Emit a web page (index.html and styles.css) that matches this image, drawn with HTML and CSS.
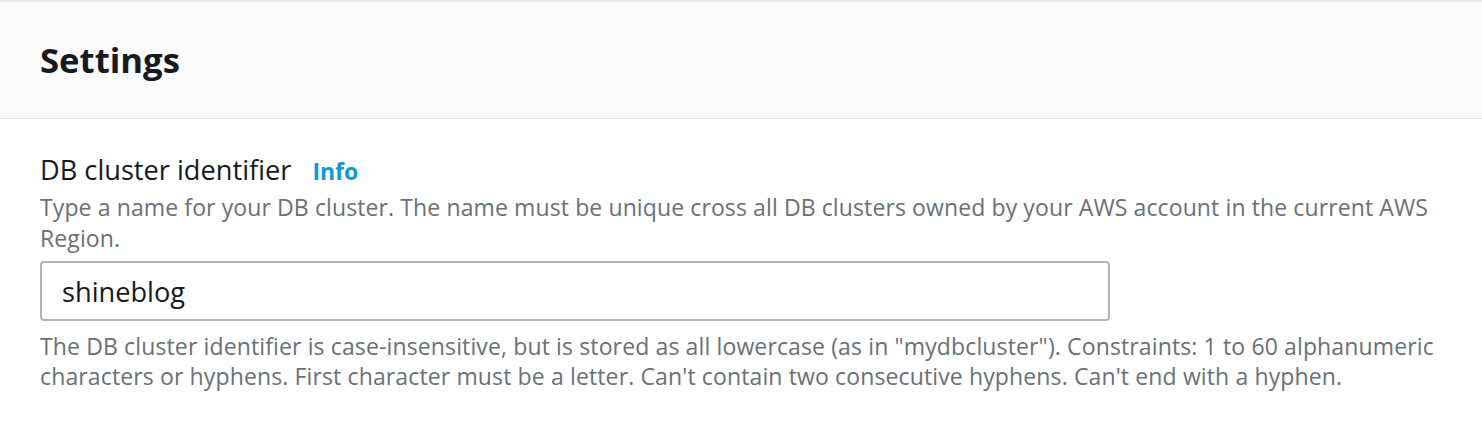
FILE: index.html
```html
<!DOCTYPE html>
<html lang="en">
<head>
<meta charset="utf-8">
<title>Settings</title>
<link rel="stylesheet" href="styles.css">
</head>
<body>
<section class="panel">
  <header class="panel-header">
    <h2 class="panel-title">Settings</h2>
  </header>
  <div class="panel-body">
    <div class="field">
      <div class="field-label">
        <span class="label-text">DB cluster identifier</span>
        <a class="info-link" href="#">Info</a>
      </div>
      <p class="field-desc">Type a name for your DB cluster. The name must be unique cross all DB clusters owned by your AWS account in the current AWS Region.</p>
      <div class="input-box">shineblog</div>
      <p class="field-constraint">The DB cluster identifier is case-insensitive, but is stored as all lowercase (as in "mydbcluster"). Constraints: 1 to 60 alphanumeric characters or hyphens. First character must be a letter. Can't contain two consecutive hyphens. Can't end with a hyphen.</p>
    </div>
  </div>
</section>
</body>
</html>
```

FILE: styles.css
```css
html, body {
  margin: 0;
  padding: 0;
  background: #ffffff;
}
body {
  font-family: "Open Sans", "Noto Sans", sans-serif;
  color: #16191f;
}
.panel {
  width: 1482px;
}
.panel-header {
  background: #fafafa;
  border-top: 2px solid #e9ebeb;
  border-bottom: 1px solid #e5e8e8;
  height: 119px;
  display: flex;
  align-items: center;
  padding: 0 40px;
  box-sizing: border-box;
}
.panel-title {
  margin: 0;
  font-size: 34.7px;
  font-weight: 700;
  color: #16191f;
  line-height: 34px;
}
.panel-body {
  padding: 31px 40px 0 40px;
}
.field-label {
  display: flex;
  align-items: baseline;
  gap: 21px;
  font-size: 27.2px;
  line-height: 39px;
}
.label-text {
  color: #16191f;
}
.info-link {
  color: #0d9bcc;
  font-weight: 700;
  font-size: 23px;
  text-decoration: none;
}
.field-desc {
  margin: 1px 0 0 0;
  font-size: 23px;
  letter-spacing: 0.11px;
  line-height: 31px;
  color: #687078;
  width: 1402px;
}
.input-box {
  margin-top: 7px;
  width: 1070px;
  height: 60px;
  box-sizing: border-box;
  border: 2px solid #aab7b8;
  border-radius: 4px;
  padding: 0 20px;
  display: flex;
  align-items: center;
  font-size: 27.2px;
  color: #16191f;
}
.field-constraint {
  margin: 10px 0 0 0;
  font-size: 23px;
  letter-spacing: 0.13px;
  line-height: 30px;
  color: #687078;
  width: 1402px;
}
```
